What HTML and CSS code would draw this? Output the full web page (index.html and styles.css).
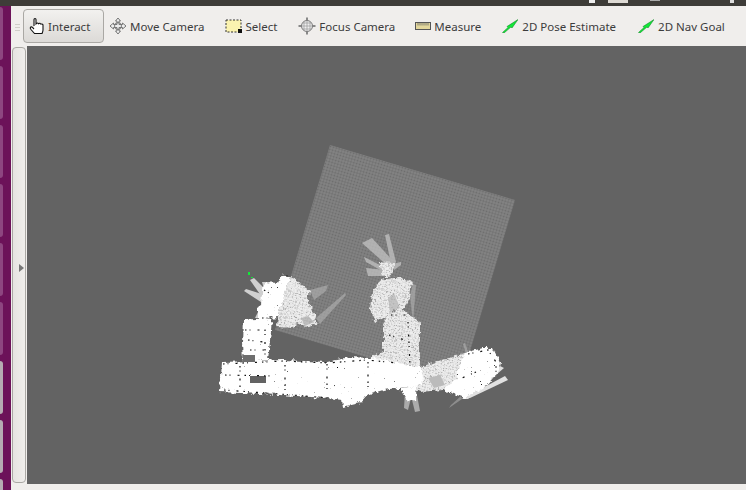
FILE: index.html

```html
<!DOCTYPE html>
<html lang="en">
<head>
  <meta charset="UTF-8" />
  <title>RViz</title>
  <link rel="stylesheet" href="styles.css">
</head>
<body>
  <div class="topbar">
    <span class="tray-arrow"></span>
    <span class="tray-block"></span>
    <span class="tray-dots"></span>
    <span class="tray-gear"></span>
  </div>
  <div class="main">
    <div class="launcher">
      <span class="app"></span>
      <span class="app"></span>
      <span class="app"></span>
      <span class="app"></span>
      <span class="app"></span>
      <span class="app"></span>
      <span class="app grey"></span>
      <span class="app grey"></span>
      <span class="app grey"></span>
    </div>
    <div class="window">
      <div class="toolbar">
        <span class="grip"></span>
        <div class="tool active">
          <svg width="20" height="20" viewBox="0 0 20 20"><path d="M6 10V3.500a1 1 0 0 1 2 0V8l.6-.6a1 1 0 0 1 1.600 0l.3.4.5-.3a1 1 0 0 1 1.500.3l.3.4.6-.2c.8-.2 1.600.3 1.600 1.200V14c0 1.500-.6 2.400-1 3.500H6.500L3 13.500c-.7-.9-1-1.700-.6-2.200.5-.6 1.400-.5 2 .1L6 13" fill="#fff" stroke="#111" stroke-width="1.100"/></svg>
          <span>Interact</span>
        </div>
        <div class="tool">
          <svg width="18" height="18" viewBox="0 0 18 18"><path d="M9 1l2.500 3H10v3.500h3.500V6l3.500 3-3.500 3v-1.500H10V14h1.500L9 17l-2.500-3H8v-3.500H4.500V12L1 9l3.500-3v1.500H8V4H6.500z" fill="#eee" stroke="#777"/><circle cx="9" cy="9" r="3.500" fill="none" stroke="#777"/></svg>
          <span>Move Camera</span>
        </div>
        <div class="tool">
          <svg width="17" height="14" viewBox="0 0 17 14"><rect x="1" y="1" width="15" height="12" fill="#fbf3b0" stroke="#333" stroke-dasharray="2 1.500"/><rect x="13" y="10" width="4" height="4" fill="#111"/></svg>
          <span>Select</span>
        </div>
        <div class="tool focus">
          <svg width="18" height="18" viewBox="0 0 18 18"><path d="M9 .5v17M.5 9h17" stroke="#888" stroke-width="2"/><circle cx="9" cy="9" r="5.500" fill="#eee" stroke="#777"/><path d="M9 3.500v11M3.500 9h11M6 4.500v9M12 4.500v9M4.500 6h9M4.500 12h9" stroke="#999" stroke-width=".7"/></svg>
          <span>Focus Camera</span>
        </div>
        <div class="tool measure">
          <svg width="16" height="8" viewBox="0 0 16 8"><rect x=".5" y=".5" width="15" height="7" fill="#e3d79c" stroke="#555"/><path d="M3 1v2.500M5 1v2.500M7 1v2.500M9 1v2.500M11 1v2.500M13 1v2.500" stroke="#666" stroke-width=".8"/></svg>
          <span>Measure</span>
        </div>
        <div class="tool goal">
          <svg width="16" height="14" viewBox="0 0 16 14"><path d="M.5 13.500L6 8.500 5 7.500 16 .5 10 9 9 8 2 14z" fill="#12e838" stroke="#087a1c" stroke-width=".5"/></svg>
          <span>2D Pose Estimate</span>
        </div>
        <div class="tool goal">
          <svg width="16" height="14" viewBox="0 0 16 14"><path d="M.5 13.500L6 8.500 5 7.500 16 .5 10 9 9 8 2 14z" fill="#12e838" stroke="#087a1c" stroke-width=".5"/></svg>
          <span>2D Nav Goal</span>
        </div>
      </div>
      <div class="content">
        <div class="side-handle"><span class="handle-arrow"></span></div>
        <svg class="view" width="719" height="438" viewBox="27 46 719 438">
          <defs>
            <pattern id="cells" width="3" height="3" patternUnits="userSpaceOnUse" patternTransform="rotate(16.500)">
              <rect width="3" height="3" fill="#848484"/>
              <circle cx="1.500" cy="1.500" r="1" fill="#6c6c6c"/>
            </pattern>
            <pattern id="free" width="3" height="3" patternUnits="userSpaceOnUse" patternTransform="rotate(16.500)">
              <rect width="3" height="3" fill="#eeeeee"/>
              <circle cx="1.500" cy="1.500" r=".8" fill="#a6a6a6"/>
            </pattern>
            <filter id="rough" filterUnits="userSpaceOnUse" x="200" y="220" width="330" height="210" color-interpolation-filters="sRGB">
              <feTurbulence type="fractalNoise" baseFrequency=".22" numOctaves="2" seed="4" result="n"/>
              <feDisplacementMap in="SourceGraphic" in2="n" scale="6" xChannelSelector="R" yChannelSelector="G"/>
            </filter>
            <filter id="specks" filterUnits="userSpaceOnUse" x="200" y="220" width="330" height="210" color-interpolation-filters="sRGB">
              <feTurbulence type="fractalNoise" baseFrequency=".22" numOctaves="2" seed="4" result="n"/>
              <feDisplacementMap in="SourceGraphic" in2="n" scale="6" xChannelSelector="R" yChannelSelector="G" result="shape"/>
              <feTurbulence type="fractalNoise" baseFrequency=".7" numOctaves="1" seed="9"/>
              <feColorMatrix type="matrix" values="0 0 0 0 0  0 0 0 0 0  0 0 0 0 0  14 0 0 0 -10.200"/>
              <feComposite in2="shape" operator="in" result="dots"/>
              <feMerge>
                <feMergeNode in="shape"/>
                <feMergeNode in="dots"/>
              </feMerge>
            </filter>
            <filter id="soft" filterUnits="userSpaceOnUse" x="200" y="220" width="330" height="210">
              <feGaussianBlur stdDeviation=".6"/>
            </filter>
          </defs>
          <!-- costmap square -->
          <polygon points="330,145 515,200 460,385 275,330" fill="url(#cells)"/>

          <!-- rays -->
          <g filter="url(#soft)">
            <g fill="#e2e2e2" opacity=".85">
              <polygon points="264,304 244,291 246,289 268,296"/>
              <polygon points="264,300 250,280 254,278 270,294"/>
              <polygon points="266,296 262,282 272,282 272,294"/>
              <polygon points="262,304 255,318 260,318 266,306"/>
            </g>
            <g fill="#b8b8b8" opacity=".55">
              <polygon points="310,290 328,285 326,291 314,300"/>
              <polygon points="316,318 345,293 346,295 320,324"/>
              <polygon points="410,296 413,284 416,285 413,322"/>
              <polygon points="466,354 463,344 465,343 469,354"/>
            </g>
            <g fill="#c8c8c8" opacity=".7">
              <polygon points="392,268 385,235 389,234 396,262"/>
              <polygon points="390,268 362,243 372,238 394,262"/>
              <polygon points="386,268 364,257 366,262 384,272"/>
              <polygon points="386,270 366,268 368,276 386,276"/>
              <polygon points="392,264 401,262 401,265 394,270"/>
            </g>
            <g fill="#efefef" opacity=".9">
              <polygon points="462,399 500,366 504,368 468,399"/>
              <polygon points="462,399 505,376 508,380 470,398"/>
            </g>
            <polygon points="462,399 449,408 451,405 461,396" fill="#aaa" opacity=".6"/>
            <g fill="#bdbdbd" opacity=".8">
              <polygon points="405,392 404,408 408,410 412,394"/>
              <polygon points="410,392 415,412 420,411 416,390"/>
            </g>
          </g>

          <!-- free space with cost overlay -->
          <g filter="url(#rough)">
            <polygon points="290,277 310,290 307,298 312,310 317,323 307,328 298,323 293,328 277,327 278,317" fill="url(#free)"/>
            <polygon points="372,293 380,280 400,277 412,282 410,297 405,308 393,310 387,317 375,322 370,310" fill="url(#free)"/>
            <polygon points="383,325 387,315 400,308 420,322 420,367 430,378 443,390 420,392 365,372 370,357 383,352" fill="url(#free)"/>
            <polygon points="420,367 465,353 470,370 443,390 428,380" fill="url(#free)"/>
            <polygon points="378,262 395,263 390,277 384,277" fill="url(#free)"/>
          </g>
          <polygon points="388,298 394,293 400,308 390,312" fill="#aaa" opacity=".6"/>
          <polygon points="301,318 308,316 314,322 305,326" fill="#aaa" opacity=".7"/>

          <!-- occupied / explored map -->
          <g fill="#fff" filter="url(#specks)">
            <polygon points="261,305 258,307 258,320 268,318 278,317 290,277 282,274 278,283 265,282 262,293"/>
            <polygon points="243,320 267,318 272,320 268,360 243,362 242,343"/>
            <polygon points="222,362 283,360 327,362 350,357 370,358 420,367 423,377 422,385 383,390 367,395 360,403 343,407 342,400 327,398 280,395 240,393 220,392"/>
            <polygon points="465,353 483,348 493,348 500,363 498,373 488,385 465,398 443,390 456,378"/>
            <polygon points="400,388 416,386 416,400 408,402"/>
          </g>
          <rect x="250" y="376" width="16" height="7" fill="#636363"/>
          <rect x="243" y="355" width="12" height="7" fill="#6e6e6e"/>
          <polygon points="428,378 440,375 445,385 434,388" fill="#bbb"/>

          <!-- walls -->
          <g fill="none" stroke="#111" stroke-width="1.200" stroke-dasharray="1.500 3 1 7 2 5">
            <path d="M245 330h20v28M248 340l15 2M250 350h14"/>
            <path d="M223 364l60-3 44 2 40-3 30 3M225 375l50 1M224 390l55 4 50 4"/>
            <path d="M240 366v24M285 365v28M327 364v32M368 362v30"/>
            <path d="M282 275l12 2M264 290l10 6M262 318h12"/>
            <path d="M391 315h18M408 322l2 44M389 335l16 5"/>
            <path d="M468 354l20-4 8 12v12M476 372l-14 6"/>
          </g>
          <g fill="#12e838">
            <rect x="248" y="272" width="2" height="3"/>
            <rect x="251" y="277" width="2" height="1"/>
          </g>
        </svg>
      </div>
    </div>
  </div>
</body>
</html>
```

FILE: styles.css

```css
html, body {
  margin: 0;
  height: 100%;
}
body {
  width: 746px;
  height: 490px;
  overflow: hidden;
  display: flex;
  flex-direction: column;
  font-family: "Noto Sans", sans-serif;
  background-color: #f0eeec;
}
.topbar {
  height: 6px;
  flex: none;
  display: flex;
  align-items: flex-start;
  background-color: #3e3c38;
}
.tray-arrow {
  width: 6px;
  height: 3px;
  margin-left: 589px;
  background-color: #eee;
}
.tray-block {
  width: 20px;
  height: 3px;
  margin-left: 13px;
  background-color: #dedad4;
}
.tray-dots {
  width: 10px;
  height: 1px;
  margin-left: 22px;
  background-color: #aaa;
}
.tray-gear {
  width: 4px;
  height: 3px;
  margin-left: 70px;
  background-color: #ddd;
}
.main {
  flex: 1;
  display: flex;
  min-height: 0;
}
.launcher {
  width: 11px;
  flex: none;
  display: flex;
  flex-direction: column;
  gap: 6px;
  padding-top: 1px;
  overflow: hidden;
  background-color: #6c1259;
}
.app {
  width: 3px;
  height: 53px;
  flex: none;
  border-radius: 0 4px 4px 0;
  background-color: #8d4680;
}
.app.grey {
  background-color: #b5abb2;
}
.window {
  flex: 1;
  min-width: 0;
  display: flex;
  flex-direction: column;
  background-color: #f0eeec;
}
.toolbar {
  height: 40px;
  flex: none;
  display: flex;
  align-items: center;
  font-size: 11.500px;
  color: #3c3c3c;
}
.grip {
  width: 5px;
  height: 8px;
  flex: none;
  margin: 3px 3px 0 4px;
  background: repeating-linear-gradient(#d0cec9 0 1px, transparent 1px 3px);
}
.tool {
  flex: none;
  display: flex;
  align-items: center;
  gap: 3px;
  margin-right: 21px;
  white-space: nowrap;
}
.tool.focus {
  margin-right: 20px;
}
.tool.measure {
  margin-right: 21px;
}
.tool.goal {
  gap: 4px;
  margin-right: 22px;
}
.tool.active {
  width: 81px;
  height: 34px;
  box-sizing: border-box;
  padding-left: 4px;
  margin-right: 5px;
  gap: 0;
  border: 1px solid #aaa8a4;
  border-radius: 4px;
  background: linear-gradient(#f2f1ef, #dcdad7);
}
.content {
  flex: 1;
  min-height: 0;
  display: flex;
  align-items: flex-start;
}
.side-handle {
  width: 14px;
  height: 436px;
  flex: none;
  margin: 1px 1px 0 1px;
  display: flex;
  align-items: center;
  justify-content: center;
  box-sizing: border-box;
  border: 1px solid #aaa8a4;
  border-radius: 4px;
  background: linear-gradient(90deg, #e6e4e1, #f0eeec);
}
.handle-arrow {
  width: 0;
  height: 0;
  margin: 5px 0 0 4px;
  border-left: 5px solid #777;
  border-top: 4px solid transparent;
  border-bottom: 4px solid transparent;
}
.view {
  flex: none;
  display: block;
  background-color: #636363;
}
```
